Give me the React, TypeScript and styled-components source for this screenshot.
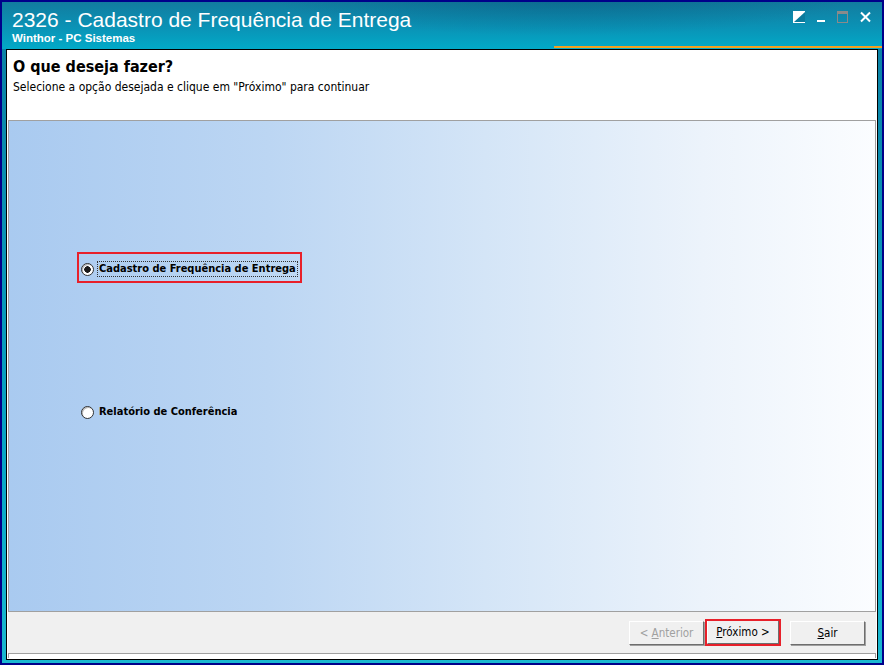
import React from "react";
import styled, { createGlobalStyle } from "styled-components";

const GlobalStyle = createGlobalStyle`
  html, body { margin: 0; padding: 0; }
  body { width: 884px; height: 665px; overflow: hidden; background: #000080; }
`;

const uiFont = `Tahoma, "DejaVu Sans Condensed", "DejaVu Sans", sans-serif`;

const Frame = styled.div`
  box-sizing: border-box;
  width: 884px;
  height: 665px;
  border: 2px solid #00008a;
  background: linear-gradient(180deg, #0b7ea2 0%, #08a6c6 70%, #1ab8d0 100%);
  display: flex;
  flex-direction: column;
  padding: 0 4px 3px 4px;
`;

const TitleBar = styled.div`
  height: 47px;
  position: relative;
  display: flex;
  justify-content: space-between;
  background:
    radial-gradient(ellipse 420px 60px at 560px -8px, rgba(0, 70, 110, 0.35), transparent 70%),
    linear-gradient(180deg, #127c9f 0%, #0a93b6 55%, #02aac8 100%);
  margin: 0 -4px;
  padding: 0 8px 0 10px;
`;

const TitleText = styled.div`
  display: flex;
  flex-direction: column;
  padding-top: 6px;
`;

const AppTitle = styled.div`
  font-family: Arial, "Liberation Sans", sans-serif;
  font-size: 21px;
  color: #ffffff;
  line-height: 24px;
`;

const AppSubtitle = styled.div`
  font-family: Arial, "Liberation Sans", sans-serif;
  font-weight: bold;
  font-size: 11.5px;
  color: #ffffff;
  line-height: 13px;
`;

const Controls = styled.div`
  display: flex;
  align-items: flex-start;
  gap: 12px;
  padding-top: 9px;
  padding-right: 3px;
`;

const OrangeLine = styled.div`
  position: absolute;
  left: 552px;
  right: 0;
  bottom: 1px;
  height: 2px;
  background: #f2a020;
`;

const Panel = styled.div`
  flex: 1;
  border: 1px solid #000;
  background: #fff;
  padding: 1px;
  display: flex;
`;

const Inner = styled.div`
  flex: 1;
  border-left: 1px solid #a0a0a0;
  border-right: 1px solid #a0a0a0;
  display: flex;
  flex-direction: column;
`;

const Header = styled.div`
  background: #fff;
  border-bottom: 1px solid #a0a0a0;
  padding: 6px 5px 0 5px;
  box-sizing: border-box;
  height: 70px;
  margin-left: -1px;
  margin-right: -1px;
`;

const Heading = styled.div`
  font-family: ${uiFont};
  font-weight: bold;
  font-size: 16px;
  line-height: 20px;
  color: #000;
`;

const Hint = styled.div`
  font-family: ${uiFont};
  font-size: 12px;
  line-height: 14px;
  color: #000;
  margin-top: 3px;
`;

const Body = styled.div`
  flex: 1;
  background: linear-gradient(90deg, #a9caf0 0%, #bcd6f3 30%, #d4e5f7 55%, #ecf3fb 80%, #fbfdff 100%);
  border-bottom: 1px solid #a0a0a0;
  display: flex;
  flex-direction: column;
  padding: 131px 0 0 68px;
`;

const Option = styled.div<{ $marked?: boolean }>`
  display: inline-flex;
  align-items: center;
  align-self: flex-start;
  gap: 3px;
  padding: 9px 4px 6px 4px;
  outline: ${(p) => (p.$marked ? "2px solid #e8202a" : "none")};
  outline-offset: -2px;
  margin-bottom: ${(p) => (p.$marked ? "112px" : "0")};
`;

const Radio = styled.span<{ $checked?: boolean }>`
  box-sizing: border-box;
  width: 13px;
  height: 13px;
  border-radius: 50%;
  border: 1px solid #333;
  background: radial-gradient(circle, ${(p) => (p.$checked ? "#1a1a1a 0 3px, #fff 3.5px" : "#fff 0")});
  box-shadow: inset 1px 1px 0 #bbb;
`;

const OptionLabel = styled.span<{ $focus?: boolean }>`
  font-family: ${uiFont};
  font-weight: bold;
  font-size: 11px;
  line-height: 14px;
  color: #000;
  padding: 0 1px;
  border: 1px dotted ${(p) => (p.$focus ? "#333" : "transparent")};
`;

const Footer = styled.div`
  height: 41px;
  background: #f0f0f0;
  border-bottom: 1px solid #a0a0a0;
  display: flex;
  justify-content: flex-end;
  align-items: center;
  padding-right: 11px;
  margin-left: -1px;
  margin-right: -1px;
  margin-bottom: 4px;
`;

const ButtonWrap = styled.div<{ $marked?: boolean }>`
  padding: 1px 2px 2px 2px;
  margin: 0 9px 0 1px;
  outline: ${(p) => (p.$marked ? "2px solid #e8202a" : "none")};
  outline-offset: -2px;
`;

const Button = styled.button<{ $disabled?: boolean; $w?: number }>`
  box-sizing: border-box;
  width: ${(p) => p.$w ?? 75}px;
  height: 24px;
  background: #f0f0f0;
  border: 1px solid;
  border-color: #ffffff #6e6e6e #6e6e6e #ffffff;
  box-shadow: 1px 1px 0 #a0a0a0;
  font-family: ${uiFont};
  font-size: 11.5px;
  color: ${(p) => (p.$disabled ? "#a0a0a0" : "#000")};
  padding: 0;
  u { text-decoration: underline; }
`;

function TitleIcons() {
  return (
    <Controls>
      <svg width="12" height="12" viewBox="0 0 12 12">
        <rect x="0" y="0" width="12" height="12" fill="#fff" />
        <polygon points="12,1 12,11 1,11" fill="#0a7a9c" />
      </svg>
      <svg width="8" height="12" viewBox="0 0 8 12">
        <rect x="0" y="9" width="8" height="2" fill="#fff" />
      </svg>
      <svg width="11" height="12" viewBox="0 0 11 12">
        <rect x="0.5" y="0.5" width="10" height="11" fill="none" stroke="#8a8a8a" />
        <rect x="0" y="0" width="11" height="3" fill="#8a8a8a" />
      </svg>
      <svg width="11" height="12" viewBox="0 0 11 12">
        <path d="M1 1.5 L10 10.5 M10 1.5 L1 10.5" stroke="#fff" strokeWidth="2" />
      </svg>
    </Controls>
  );
}

export default function App() {
  return (
    <>
      <GlobalStyle />
      <Frame>
        <TitleBar>
          <TitleText>
            <AppTitle>2326 - Cadastro de Frequência de Entrega</AppTitle>
            <AppSubtitle>Winthor - PC Sistemas</AppSubtitle>
          </TitleText>
          <TitleIcons />
          <OrangeLine />
        </TitleBar>
        <Panel>
          <Inner>
            <Header>
              <Heading>O que deseja fazer?</Heading>
              <Hint>Selecione a opção desejada e clique em "Próximo" para continuar</Hint>
            </Header>
            <Body>
              <Option $marked>
                <Radio $checked />
                <OptionLabel $focus>Cadastro de Frequência de Entrega</OptionLabel>
              </Option>
              <Option>
                <Radio />
                <OptionLabel>Relatório de Conferência</OptionLabel>
              </Option>
            </Body>
            <Footer>
              <Button $disabled>
                &lt; <u>A</u>nterior
              </Button>
              <ButtonWrap $marked>
                <Button $w={72}>
                  <u>P</u>róximo &gt;
                </Button>
              </ButtonWrap>
              <Button>
                <u>S</u>air
              </Button>
            </Footer>
          </Inner>
        </Panel>
      </Frame>
    </>
  );
}
